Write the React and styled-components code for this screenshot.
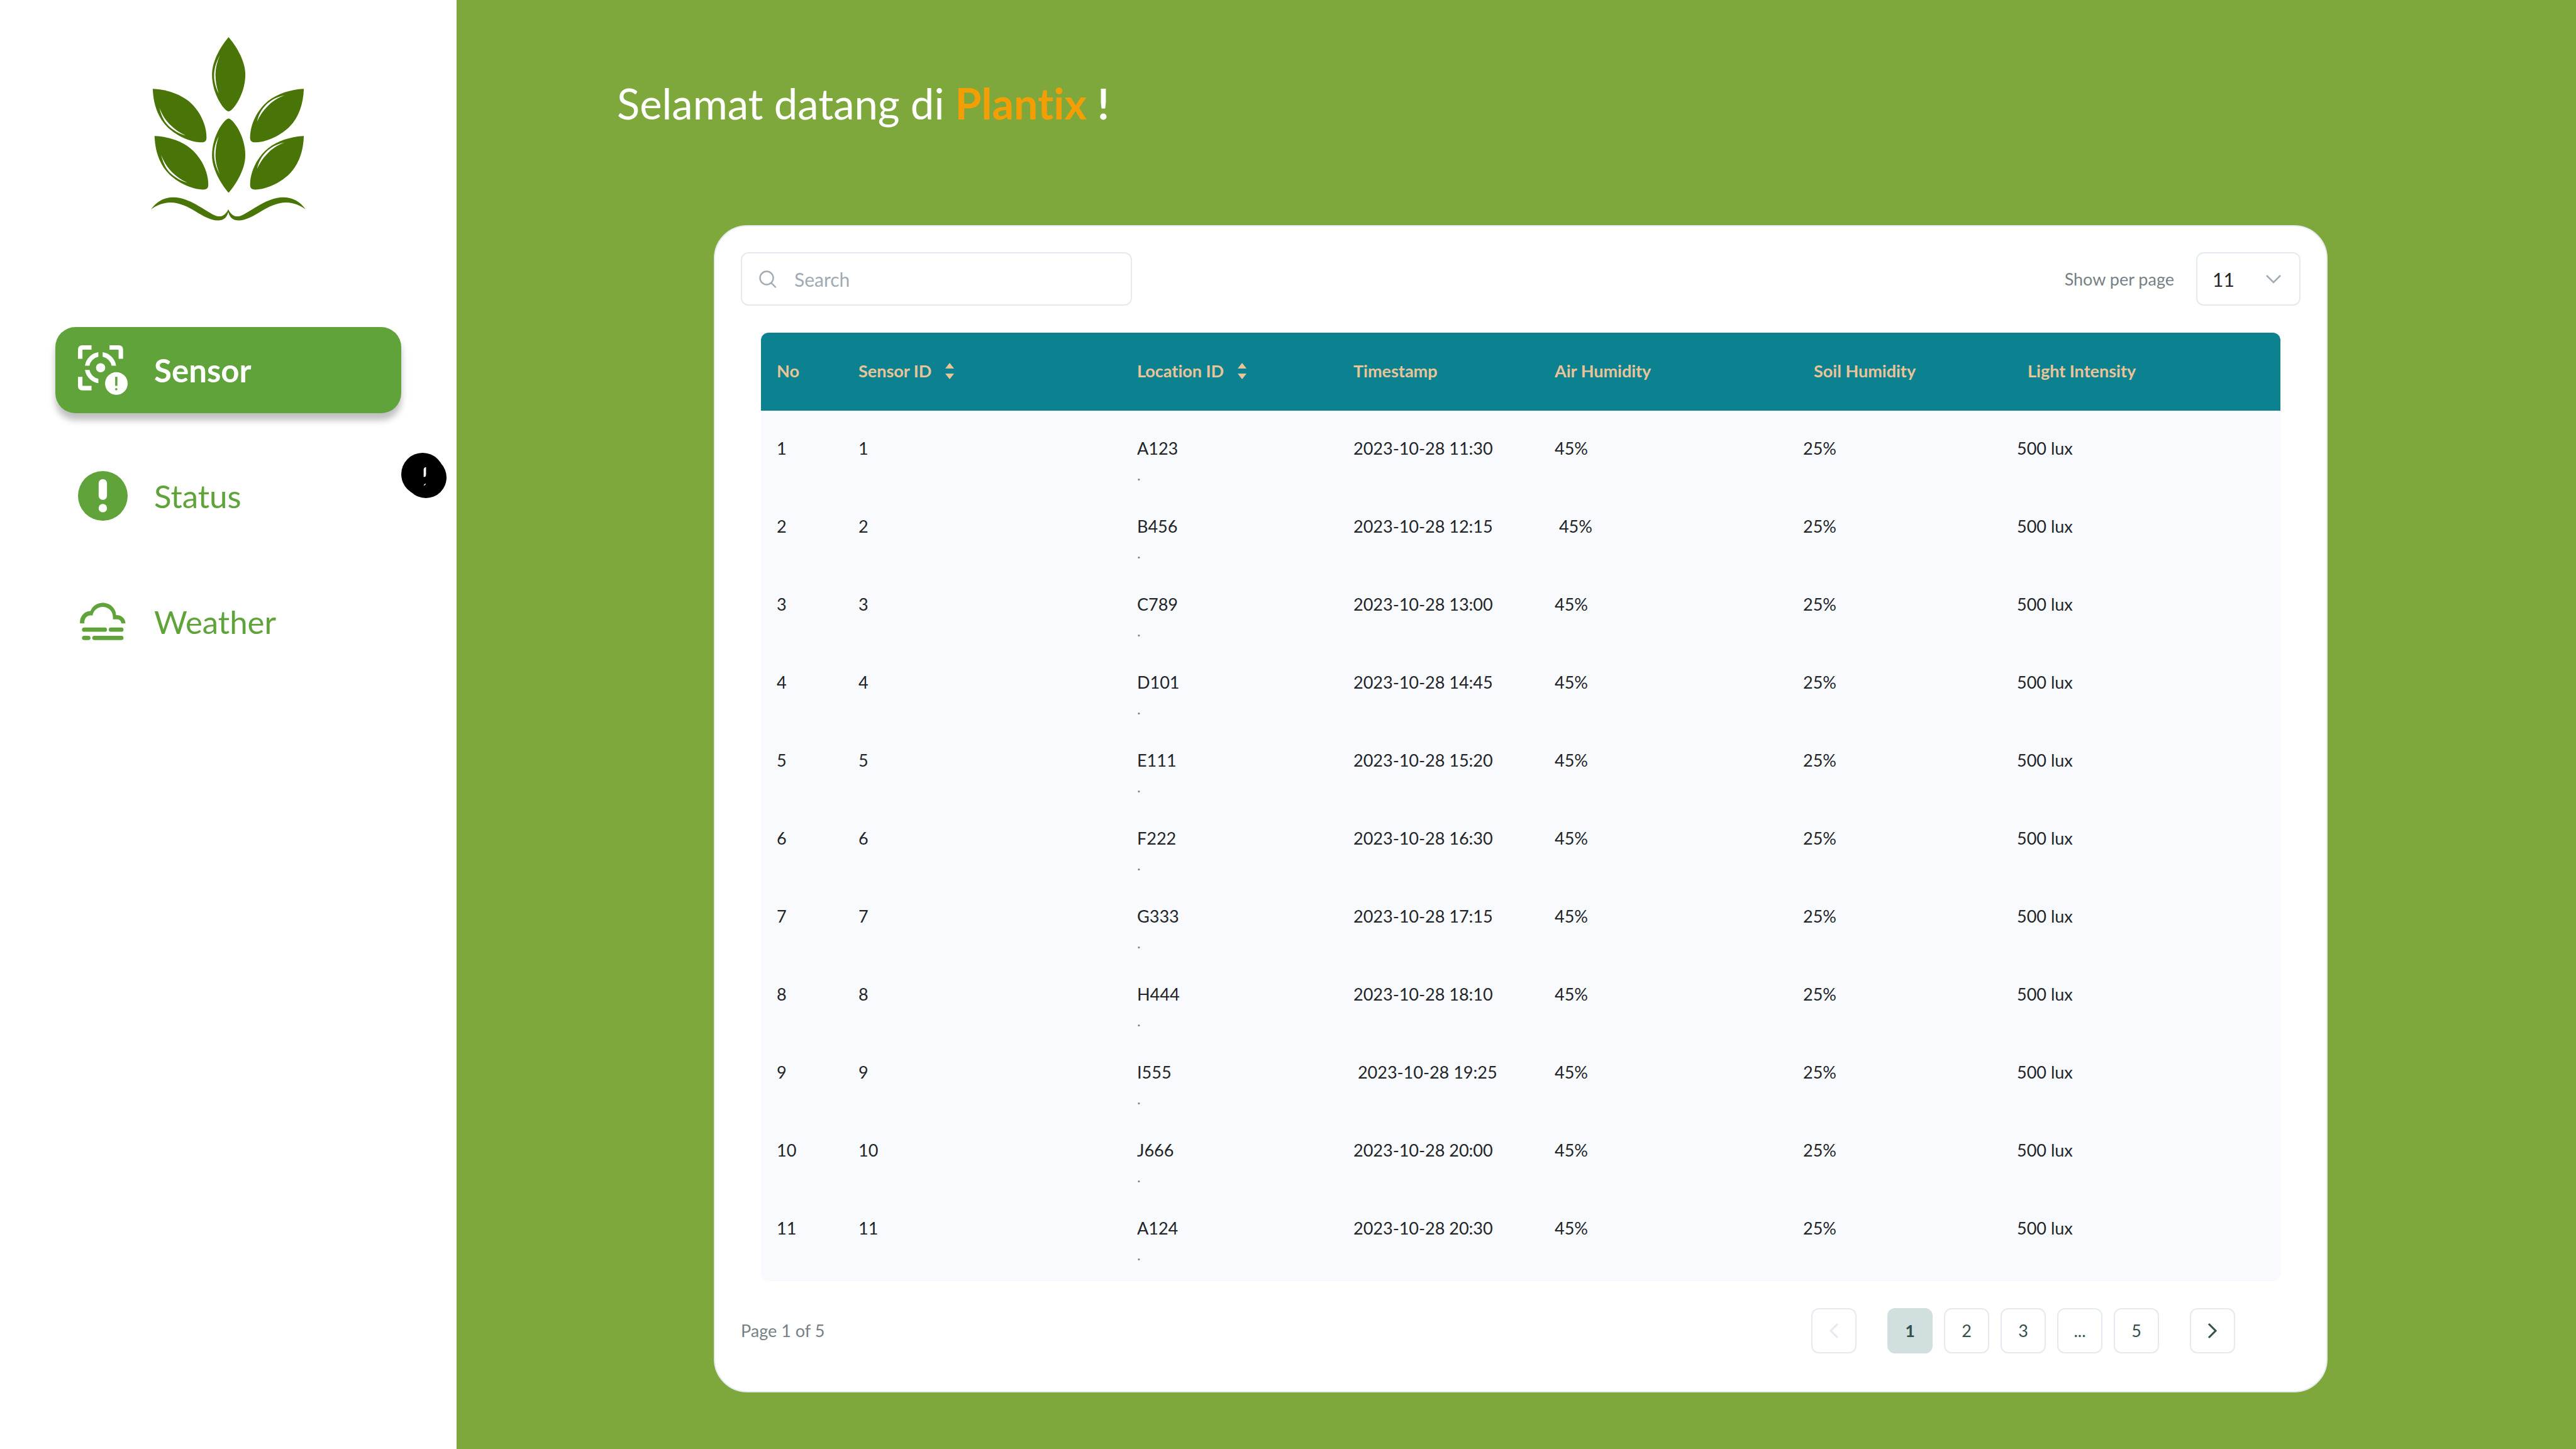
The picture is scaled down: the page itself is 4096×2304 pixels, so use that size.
import React from "react";
import styled, { createGlobalStyle, css } from "styled-components";

const GlobalStyle = createGlobalStyle`
  *, *::before, *::after { box-sizing: border-box; }
  body {
    margin: 0;
    background: #7ea83c;
    font-family: Lato, "Noto Sans", sans-serif;
    font-variant-ligatures: none;
  }
  button, input, select { font: inherit; font-variant-ligatures: inherit; }
`;

const Page = styled.div`
  display: flex;
  min-height: 100vh;
  background: #7ea83c;
`;

/* ---------- sidebar ---------- */

const Sidebar = styled.aside`
  flex: 0 0 726px;
  display: flex;
  flex-direction: column;
  align-items: center;
  gap: 169px;
  padding: 59px 88px;
  background: #fff;
`;

const LogoMark = styled.svg`
  width: 246px;
  height: 292px;
  fill: #497407;
`;

const Nav = styled.nav`
  align-self: stretch;
  display: flex;
  flex-direction: column;
  gap: 63px;
`;

const NavItem = styled.div`
  position: relative;
`;

const NavLink = styled.a`
  display: flex;
  align-items: center;
  gap: 42px;
  height: 137px;
  padding: 0 36px;
  border-radius: 32px;
  font-size: 51px;
  line-height: 64px;
  text-decoration: none;
  color: #60a33b;
  ${(p) =>
    p.$active &&
    css`
      background: #60a33b;
      color: #fff;
      font-weight: 700;
      box-shadow: 0 11px 11px rgba(0, 0, 0, 0.25);
    `}
`;

const NavIcon = styled.svg`
  width: 79px;
  height: 79px;
  flex: none;
`;

const Alert = styled.svg`
  position: absolute;
  top: 0;
  left: 100%;
  width: 72px;
  height: 72px;
`;

/* ---------- main ---------- */

const Main = styled.main`
  flex: 1;
  min-width: 0;
  padding: 124px 395px 89px 255px;
`;

const Title = styled.h1`
  margin: 0 0 154px;
  font-size: 67px;
  line-height: 80px;
  font-weight: 400;
  color: #fff;
`;

const Brand = styled.strong`
  font-size: 68px;
  font-weight: 700;
  color: #f39e05;
`;

const Card = styled.section`
  margin-left: 154px;
  padding: 41px 41px 60px;
  border: 2px solid #e4eaef;
  border-radius: 53px;
  background: #fff;
`;

const Toolbar = styled.div`
  display: flex;
  justify-content: space-between;
  align-items: center;
`;

const SearchBox = styled.label`
  display: flex;
  align-items: center;
  gap: 28px;
  width: 622px;
  height: 85px;
  padding: 0 27px;
  border: 2px solid #e4eaef;
  border-radius: 12px;
`;

const SearchIcon = styled.svg`
  width: 28px;
  height: 28px;
  flex: none;
  fill: none;
  stroke: #a0abb5;
  stroke-width: 2.4;
  stroke-linecap: round;
`;

const SearchInput = styled.input`
  flex: 1;
  min-width: 0;
  padding: 0;
  border: 0;
  outline: 0;
  background: none;
  font-size: 30px;
  line-height: 40px;
  color: #212529;
  &::placeholder { color: #a0abb5; opacity: 1; }
`;

const PageSize = styled.div`
  display: flex;
  align-items: center;
  gap: 35px;
`;

const Muted = styled.span`
  font-size: 27px;
  line-height: 36px;
  color: #777f87;
`;

const SelectWrap = styled.div`
  position: relative;
`;

const Select = styled.select`
  display: block;
  appearance: none;
  width: 166px;
  height: 85px;
  padding: 0 24px;
  border: 2px solid #e4eaef;
  border-radius: 12px;
  background: #fff;
  font-size: 30px;
  color: #212529;
`;

const SelectArrow = styled.svg`
  position: absolute;
  top: 35px;
  right: 30px;
  width: 26px;
  height: 16px;
  pointer-events: none;
  fill: none;
  stroke: #a0abb5;
  stroke-width: 2.6;
`;

/* ---------- table ---------- */

const TableWrap = styled.div`
  margin: 43px 32px;
  padding-bottom: 20px;
  border-radius: 12px;
  overflow: hidden;
  background: #f8fafe;
`;

const Table = styled.table`
  width: 100%;
  table-layout: fixed;
  border-collapse: collapse;
`;

const Col = styled.col`
  width: ${(p) => p.$w}px;
`;

const HeadCell = styled.th`
  height: 124px;
  padding: 0 0 2px ${(p) => (p.$inset ? 42 : 25)}px;
  background: #0c8290;
  color: #e8c499;
  font-size: 27px;
  line-height: 36px;
  font-weight: 700;
  text-align: left;
  white-space: nowrap;
`;

const SortButton = styled.button`
  display: flex;
  align-items: center;
  gap: 22px;
  padding: 0;
  border: 0;
  background: none;
  color: inherit;
`;

const SortIcon = styled.svg`
  width: 14px;
  height: 26px;
  fill: currentColor;
`;

const Cell = styled.td`
  height: 124px;
  padding: 42px 0 0 25px;
  vertical-align: top;
  font-size: 27px;
  line-height: 36px;
  color: #212529;
  white-space: pre;
`;

const SubText = styled.div`
  margin-top: 12px;
  font-size: 24px;
  line-height: 24px;
  color: #777f87;
`;

/* ---------- footer ---------- */

const Footer = styled.div`
  display: flex;
  align-items: center;
  justify-content: space-between;
  padding-right: 104px;
`;

const Pager = styled.nav`
  display: flex;
  gap: 49px;
`;

const PageList = styled.div`
  display: flex;
  gap: 18px;
`;

const PageButton = styled.button`
  display: flex;
  align-items: center;
  justify-content: center;
  width: 72px;
  height: 72px;
  padding: 0;
  border: 2px solid ${(p) => (p.$current ? "#d1dfde" : "#e4eaef")};
  border-radius: 12px;
  background: ${(p) => (p.$current ? "#d1dfde" : "#fff")};
  font-size: 27px;
  line-height: 36px;
  font-weight: ${(p) => (p.$current ? 700 : 400)};
  color: #34504d;
  &:disabled { color: #e4eaef; }
`;

const Arrow = styled.svg`
  width: 16px;
  height: 26px;
  fill: none;
  stroke: currentColor;
  stroke-width: 3;
`;

const LEAF_TOP =
  "M572 70C528 122 461 222 461 322C461 455 545 568 572 568C599 568 684 455 684 322C684 222 616 122 572 70Z";
const LEAF_TOP_SHINE =
  "M513 192C485 245 475 285 475 330C475 375 490 420 506 448C492 410 484 365 484 322C484 280 495 235 513 192Z";
const LEAF_SIDE =
  "M64 416C150 420 240 448 302 497C380 560 424 660 424 742C424 765 415 775 390 775C310 775 210 722 158 668C98 605 68 520 64 416Z";
const SHINE_LEFT =
  "M108 542C122 600 142 637 170 665C205 697 245 720 285 729C245 711 210 688 179 656C150 627 126 590 108 542Z";
const SHINE_RIGHT =
  "M946 460C890 472 845 498 815 532C785 565 770 600 763 636C780 600 798 570 828 539C860 503 900 478 946 460Z";
const WAVE =
  "M52 1224C90 1170 140 1143 203 1143C310 1143 410 1232 480 1264C520 1282 550 1264 570 1224L572 1230C566 1270 545 1298 500 1298C400 1298 310 1178 182 1178C130 1178 85 1200 52 1224Z";

function Logo() {
  return (
    <LogoMark viewBox="52 70 1036 1230" role="img" aria-label="Plantix">
      <path d={LEAF_TOP} />
      <path d={LEAF_TOP_SHINE} fill="#fff" />
      <g transform="matrix(1 0 0 -1 0 1183)">
        <path d={LEAF_TOP} />
        <path d={LEAF_TOP_SHINE} fill="#fff" />
      </g>
      {["", "translate(12 316)"].map((t) => (
        <g key={t} transform={t || undefined}>
          <path d={LEAF_SIDE} />
          <path d={SHINE_LEFT} fill="#fff" />
        </g>
      ))}
      {["", "translate(0 316)"].map((t) => (
        <g key={t} transform={t || undefined}>
          <path d={LEAF_SIDE} transform="matrix(-1 0 0 1 1140 0)" />
          <path d={SHINE_RIGHT} fill="#fff" />
        </g>
      ))}
      <path d={WAVE} />
      <path d={WAVE} transform="matrix(-1 0 0 1 1140 0)" />
    </LogoMark>
  );
}

function SensorIcon() {
  return (
    <NavIcon viewBox="42 48 334 334" fill="#fff" aria-hidden="true">
      <path d="M42 139V78Q42 48 72 48H133V78H72V139Z" />
      <path d="M254 48H315Q345 48 345 78V139H315V78H254Z" />
      <path d="M42 260H72V321H133V351H72Q42 351 42 321Z" />
      <path d="M89 185A106 106 0 0 1 179 95V125A76 76 0 0 0 119 185Z" />
      <path d="M208 95A106 106 0 0 1 298 185H268A76 76 0 0 0 208 125Z" />
      <path d="M89 214H119A76 76 0 0 0 179 273V303A106 106 0 0 1 89 214Z" />
      <circle cx="194" cy="199" r="31" />
      <circle cx="300" cy="305" r="76" />
      <rect x="292" y="260" width="15" height="61" fill="#60a33b" />
      <circle cx="299.500" cy="343" r="8" fill="#60a33b" />
    </NavIcon>
  );
}

function StatusIcon() {
  return (
    <NavIcon viewBox="0 0 112 112" aria-hidden="true">
      <circle cx="56" cy="56" r="56" fill="#60a33b" />
      <rect x="46.600" y="18" width="18.800" height="47" rx="9.400" fill="#fff" />
      <circle cx="56" cy="83.500" r="9.500" fill="#fff" />
    </NavIcon>
  );
}

function WeatherIcon() {
  return (
    <NavIcon viewBox="42 1 334 334" fill="#60a33b" aria-hidden="true">
      <path d="M56 180C52 135 84 97 126 96C140 62 172 41 208 41C258 41 298 78 298 124C334 122 361 148 361 180H333C333 162 321 152 304 152H277V138C277 98 247 69 208 69C174 69 146 92 140 127C104 119 82 146 85 180Z" />
      <rect x="69" y="207" width="168" height="29" rx="14.500" />
      <rect x="249" y="207" width="99" height="29" rx="14.500" />
      <rect x="69" y="263" width="57" height="29" rx="14.500" />
      <rect x="138" y="263" width="210" height="29" rx="14.500" />
    </NavIcon>
  );
}

function AlertBadge() {
  return (
    <Alert viewBox="37 42 305 305" role="img" aria-label="Alert">
      <circle cx="181" cy="186" r="144" />
      <circle cx="203" cy="208" r="139" />
      <path d="M188 204V152Q191 139 204 138V185Q203 204 196 204Z" fill="#fff" />
      <path d="M188 264Q191 251 204 249Q201 261 188 264Z" fill="#fff" />
    </Alert>
  );
}

const COLUMNS = [
  { label: "No", w: 130 },
  { label: "Sensor ID", w: 443, sort: true },
  { label: "Location ID", w: 344, sort: true },
  { label: "Timestamp", w: 320 },
  { label: "Air Humidity", w: 395 },
  { label: "Soil Humidity", w: 340, inset: true },
  { label: "Light Intensity", w: 445, inset: true },
];

const ROWS = [
  ["1", "A123", "2023-10-28 11:30", "45%"],
  ["2", "B456", "2023-10-28 12:15", " 45%"],
  ["3", "C789", "2023-10-28 13:00", "45%"],
  ["4", "D101", "2023-10-28 14:45", "45%"],
  ["5", "E111", "2023-10-28 15:20", "45%"],
  ["6", "F222", "2023-10-28 16:30", "45%"],
  ["7", "G333", "2023-10-28 17:15", "45%"],
  ["8", "H444", "2023-10-28 18:10", "45%"],
  ["9", "I555", " 2023-10-28 19:25", "45%"],
  ["10", "J666", "2023-10-28 20:00", "45%"],
  ["11", "A124", "2023-10-28 20:30", "45%"],
];

const PAGES = ["1", "2", "3", "...", "5"];

export default function App() {
  return (
    <>
      <GlobalStyle />
      <Page>
        <Sidebar>
          <Logo />
          <Nav aria-label="Main">
            <NavItem>
              <NavLink href="#sensor" $active aria-current="page">
                <SensorIcon />
                Sensor
              </NavLink>
            </NavItem>
            <NavItem>
              <NavLink href="#status">
                <StatusIcon />
                Status
              </NavLink>
              <AlertBadge />
            </NavItem>
            <NavItem>
              <NavLink href="#weather">
                <WeatherIcon />
                Weather
              </NavLink>
            </NavItem>
          </Nav>
        </Sidebar>

        <Main>
          <Title>
            Selamat datang di <Brand>Plantix</Brand> <strong>!</strong>
          </Title>
          <Card>
            <Toolbar>
              <SearchBox>
                <SearchIcon viewBox="0 0 28 28" aria-hidden="true">
                  <circle cx="12" cy="12" r="10.500" />
                  <path d="M19.500 20L26 26.500" />
                </SearchIcon>
                <SearchInput type="text" placeholder="Search" aria-label="Search" />
              </SearchBox>
              <PageSize>
                <Muted as="label" htmlFor="page-size">
                  Show per page
                </Muted>
                <SelectWrap>
                  <Select id="page-size" defaultValue="11">
                    <option>11</option>
                  </Select>
                  <SelectArrow viewBox="0 0 26 16" aria-hidden="true">
                    <path d="M2 2L13 13L24 2" />
                  </SelectArrow>
                </SelectWrap>
              </PageSize>
            </Toolbar>

            <TableWrap>
              <Table>
                <colgroup>
                  {COLUMNS.map((c) => (
                    <Col key={c.label} $w={c.w} />
                  ))}
                </colgroup>
                <thead>
                  <tr>
                    {COLUMNS.map((c) => (
                      <HeadCell key={c.label} scope="col" $inset={c.inset}>
                        {c.sort ? (
                          <SortButton type="button">
                            {c.label}
                            <SortIcon viewBox="0 0 14 26" aria-hidden="true">
                              <path d="M7 0L14 9H0ZM0 17H14L7 26Z" />
                            </SortIcon>
                          </SortButton>
                        ) : (
                          c.label
                        )}
                      </HeadCell>
                    ))}
                  </tr>
                </thead>
                <tbody>
                  {ROWS.map(([id, location, time, air]) => (
                    <tr key={id}>
                      <Cell>{id}</Cell>
                      <Cell>{id}</Cell>
                      <Cell>
                        {location}
                        <SubText>.</SubText>
                      </Cell>
                      <Cell>{time}</Cell>
                      <Cell>{air}</Cell>
                      <Cell>25%</Cell>
                      <Cell>500 lux</Cell>
                    </tr>
                  ))}
                </tbody>
              </Table>
            </TableWrap>

            <Footer>
              <Muted>Page 1 of 5</Muted>
              <Pager aria-label="Pagination">
                <PageButton type="button" disabled aria-label="Previous page">
                  <Arrow viewBox="0 0 16 26" aria-hidden="true">
                    <path d="M14 2L3 13L14 24" />
                  </Arrow>
                </PageButton>
                <PageList>
                  {PAGES.map((p) => (
                    <PageButton key={p} type="button" $current={p === "1"}>
                      {p}
                    </PageButton>
                  ))}
                </PageList>
                <PageButton type="button" aria-label="Next page">
                  <Arrow viewBox="0 0 16 26" aria-hidden="true">
                    <path d="M2 2L13 13L2 24" />
                  </Arrow>
                </PageButton>
              </Pager>
            </Footer>
          </Card>
        </Main>
      </Page>
    </>
  );
}
